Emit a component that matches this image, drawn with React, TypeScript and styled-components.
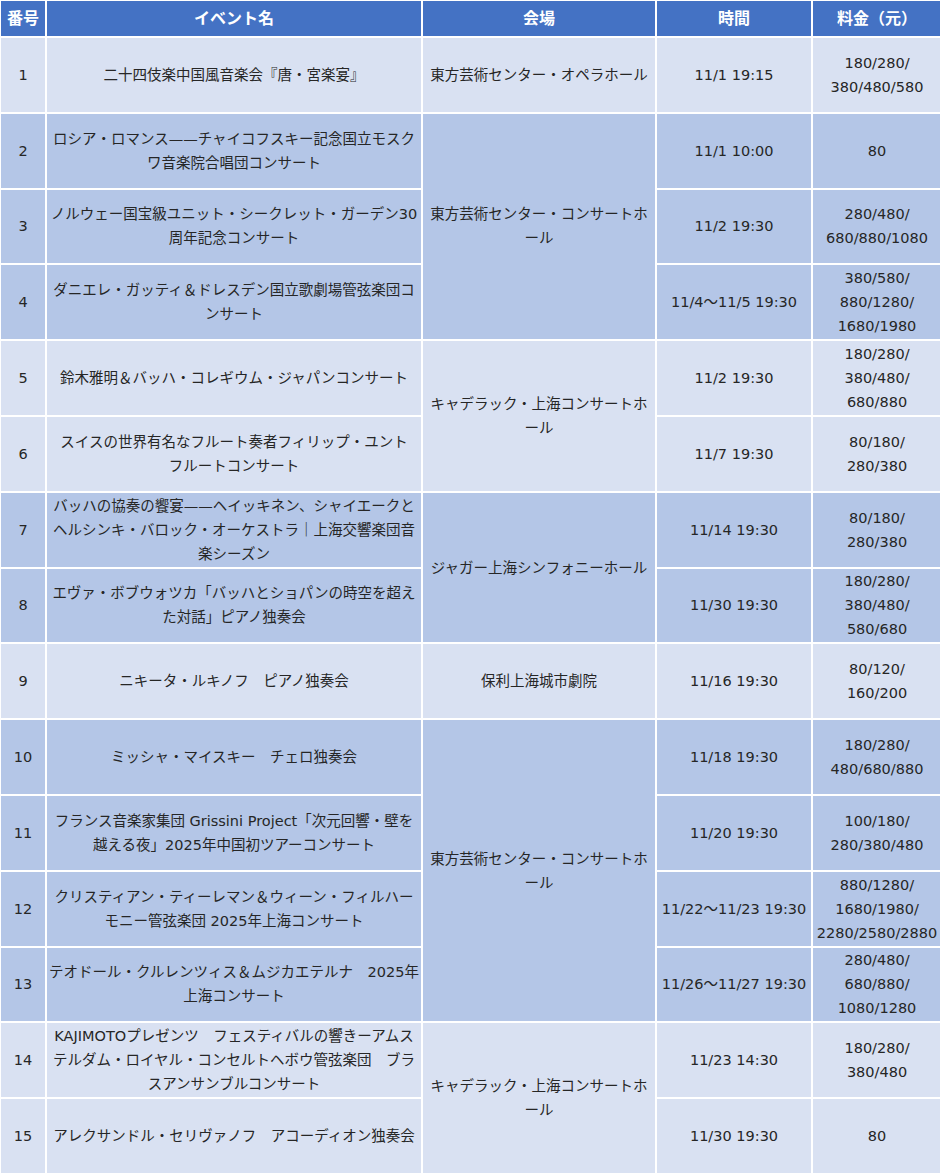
import React from "react";
import styled, { createGlobalStyle } from "styled-components";

type Tone = "light" | "dark";

interface IEvent {
  no: number;
  name: string[];
  time: string;
  price: string[];
}

interface IVenueGroup {
  venue: string[];
  tone: Tone;
  events: IEvent[];
}

const groups: IVenueGroup[] = [
  {
    venue: ["東方芸術センター・オペラホール"],
    tone: "light",
    events: [
      {
        no: 1,
        name: ["二十四伎楽中国風音楽会『唐・宮楽宴』"],
        time: "11/1 19:15",
        price: ["180/280/", "380/480/580"],
      },
    ],
  },
  {
    venue: ["東方芸術センター・コンサートホ", "ール"],
    tone: "dark",
    events: [
      {
        no: 2,
        name: ["ロシア・ロマンス——チャイコフスキー記念国立モスク", "ワ音楽院合唱団コンサート"],
        time: "11/1 10:00",
        price: ["80"],
      },
      {
        no: 3,
        name: ["ノルウェー国宝級ユニット・シークレット・ガーデン30", "周年記念コンサート"],
        time: "11/2 19:30",
        price: ["280/480/", "680/880/1080"],
      },
      {
        no: 4,
        name: ["ダニエレ・ガッティ＆ドレスデン国立歌劇場管弦楽団コ", "ンサート"],
        time: "11/4～11/5 19:30",
        price: ["380/580/", "880/1280/", "1680/1980"],
      },
    ],
  },
  {
    venue: ["キャデラック・上海コンサートホ", "ール"],
    tone: "light",
    events: [
      {
        no: 5,
        name: ["鈴木雅明＆バッハ・コレギウム・ジャパンコンサート"],
        time: "11/2 19:30",
        price: ["180/280/", "380/480/", "680/880"],
      },
      {
        no: 6,
        name: ["スイスの世界有名なフルート奏者フィリップ・ユント", "フルートコンサート"],
        time: "11/7 19:30",
        price: ["80/180/", "280/380"],
      },
    ],
  },
  {
    venue: ["ジャガー上海シンフォニーホール"],
    tone: "dark",
    events: [
      {
        no: 7,
        name: [
          "バッハの協奏の饗宴——ヘイッキネン、シャイエークと",
          "ヘルシンキ・バロック・オーケストラ｜上海交響楽団音",
          "楽シーズン",
        ],
        time: "11/14 19:30",
        price: ["80/180/", "280/380"],
      },
      {
        no: 8,
        name: ["エヴァ・ボブウォツカ「バッハとショパンの時空を超え", "た対話」ピアノ独奏会"],
        time: "11/30 19:30",
        price: ["180/280/", "380/480/", "580/680"],
      },
    ],
  },
  {
    venue: ["保利上海城市劇院"],
    tone: "light",
    events: [
      {
        no: 9,
        name: ["ニキータ・ルキノフ　ピアノ独奏会"],
        time: "11/16 19:30",
        price: ["80/120/", "160/200"],
      },
    ],
  },
  {
    venue: ["東方芸術センター・コンサートホ", "ール"],
    tone: "dark",
    events: [
      {
        no: 10,
        name: ["ミッシャ・マイスキー　チェロ独奏会"],
        time: "11/18 19:30",
        price: ["180/280/", "480/680/880"],
      },
      {
        no: 11,
        name: ["フランス音楽家集団 Grissini Project「次元回響・壁を", "越える夜」2025年中国初ツアーコンサート"],
        time: "11/20 19:30",
        price: ["100/180/", "280/380/480"],
      },
      {
        no: 12,
        name: ["クリスティアン・ティーレマン＆ウィーン・フィルハー", "モニー管弦楽団 2025年上海コンサート"],
        time: "11/22～11/23 19:30",
        price: ["880/1280/", "1680/1980/", "2280/2580/2880"],
      },
      {
        no: 13,
        name: ["テオドール・クルレンツィス＆ムジカエテルナ　2025年", "上海コンサート"],
        time: "11/26～11/27 19:30",
        price: ["280/480/", "680/880/", "1080/1280"],
      },
    ],
  },
  {
    venue: ["キャデラック・上海コンサートホ", "ール"],
    tone: "light",
    events: [
      {
        no: 14,
        name: [
          "KAJIMOTOプレゼンツ　フェスティバルの響きーアムス",
          "テルダム・ロイヤル・コンセルトヘボウ管弦楽団　ブラ",
          "スアンサンブルコンサート",
        ],
        time: "11/23 14:30",
        price: ["180/280/", "380/480"],
      },
      {
        no: 15,
        name: ["アレクサンドル・セリヴァノフ　アコーディオン独奏会"],
        time: "11/30 19:30",
        price: ["80"],
      },
    ],
  },
];

const GlobalStyle = createGlobalStyle`
  html, body {
    margin: 0;
    padding: 0;
    background: #ffffff;
    overflow: hidden;
  }
  body {
    font-family: "DejaVu Sans", "Noto Sans CJK JP", sans-serif;
  }
`;

const Table = styled.table`
  margin: -1px 0 0 -1px;
  border-collapse: separate;
  border-spacing: 2px;
  table-layout: fixed;
  width: 944px;
  font-family: "DejaVu Sans", "Noto Sans CJK JP", sans-serif;
  font-size: 14.5px;
  line-height: 24px;
  color: #262626;
`;

const HeadCell = styled.th<{ $w: number }>`
  width: ${(p) => p.$w}px;
  height: 35px;
  padding: 0;
  background-color: #4472c4;
  color: #ffffff;
  font-weight: bold;
  font-size: 16px;
  text-align: center;
  vertical-align: middle;
`;

const Cell = styled.td<{ $tone: Tone }>`
  height: 73.8px;
  padding: 0 2px;
  background-color: ${(p) => (p.$tone === "dark" ? "#b4c6e7" : "#d9e1f2")};
  text-align: center;
  vertical-align: middle;
  white-space: nowrap;
  overflow: visible;
`;

const Line = styled.div`
  white-space: nowrap;
`;

const Lines = ({ lines }: { lines: string[] }) => (
  <>
    {lines.map((l, i) => (
      <Line key={i}>{l}</Line>
    ))}
  </>
);

const App = () => {
  return (
    <>
      <GlobalStyle />
      <Table>
        <thead>
          <tr>
            <HeadCell $w={44}>番号</HeadCell>
            <HeadCell $w={374}>イベント名</HeadCell>
            <HeadCell $w={232}>会場</HeadCell>
            <HeadCell $w={154}>時間</HeadCell>
            <HeadCell $w={128}>料金（元）</HeadCell>
          </tr>
        </thead>
        <tbody>
          {groups.map((g) =>
            g.events.map((ev, i) => (
              <tr key={ev.no}>
                <Cell $tone={g.tone}>{ev.no}</Cell>
                <Cell $tone={g.tone}>
                  <Lines lines={ev.name} />
                </Cell>
                {i === 0 && (
                  <Cell $tone={g.tone} rowSpan={g.events.length}>
                    <Lines lines={g.venue} />
                  </Cell>
                )}
                <Cell $tone={g.tone}>{ev.time}</Cell>
                <Cell $tone={g.tone}>
                  <Lines lines={ev.price} />
                </Cell>
              </tr>
            ))
          )}
        </tbody>
      </Table>
    </>
  );
};

export default App;
